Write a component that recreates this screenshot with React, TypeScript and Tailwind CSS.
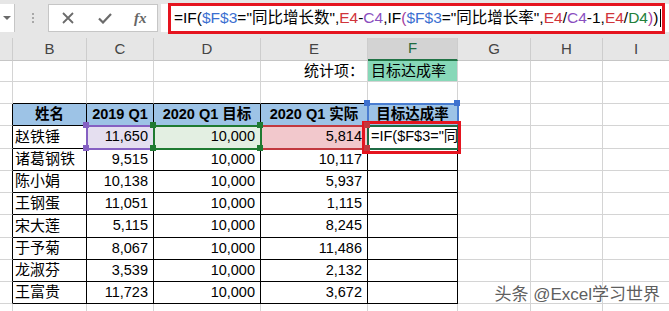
import React from "react";

type Row = [string, string, string, string];

const people: Row[] = [
  ["赵铁锤", "11,650", "10,000", "5,814"],
  ["诸葛钢铁", "9,515", "10,000", "10,117"],
  ["陈小娟", "10,138", "10,000", "5,937"],
  ["王钢蛋", "11,051", "10,000", "1,115"],
  ["宋大莲", "5,115", "10,000", "8,245"],
  ["于予菊", "8,067", "10,000", "11,486"],
  ["龙淑芬", "3,539", "10,000", "2,132"],
  ["王富贵", "11,723", "10,000", "3,672"],
];

const letters = ["", "B", "C", "D", "E", "F", "G", "H", "I"];

function Cell({ r, c, className = "", children }: { r: number; c: number; className?: string; children?: React.ReactNode }) {
  const edgeR = r >= 3 && r <= 11 && c <= 5;
  const edgeB = r >= 2 && r <= 11 && c >= 1 && c <= 5;
  return (
    <div
      className={`relative flex items-center whitespace-nowrap border-r border-b ${
        edgeR ? "border-r-black" : "border-r-[#d4d4d4]"
      } ${edgeB ? "border-b-black" : "border-b-[#d4d4d4]"} ${className}`}
    >
      {children}
    </div>
  );
}

// little square grips on the corners of a referenced range
function Grips({ color, corners }: { color: string; corners: string[] }) {
  return (
    <>
      {corners.map((k) => (
        <span
          key={k}
          className={`absolute z-10 h-[6px] w-[6px] ${color} ${
            k === "tl"
              ? "-left-[4px] -top-[4px]"
              : k === "tr"
              ? "-right-[3px] -top-[4px]"
              : k === "bl"
              ? "-bottom-[3px] -left-[4px]"
              : "-bottom-[3px] -right-[3px]"
          }`}
        />
      ))}
    </>
  );
}

function Toolbar() {
  return (
    <div className="flex h-[38px] items-start bg-[#e6e6e6] pt-[4px]">
      <div className="flex h-[28px] w-[15px] items-center justify-center border-r border-[#c6c6c6] bg-white">
        <div className="h-0 w-0 border-x-[4px] border-t-[4px] border-x-transparent border-t-[#6a6a6a]" />
      </div>
      <div className="ml-[17px] flex h-[28px] flex-col items-center justify-center gap-[2px]">
        <div className="h-[2px] w-[2px] bg-[#a8a8a8]" />
        <div className="h-[2px] w-[2px] bg-[#a8a8a8]" />
        <div className="h-[2px] w-[2px] bg-[#a8a8a8]" />
      </div>
      <div className="ml-[14px] flex h-[28px] w-[110px] items-center border border-[#c6c6c6] bg-white">
        <svg width="12" height="12" viewBox="0 0 12 12" className="ml-[13px]">
          <path d="M1 1L11 11M11 1L1 11" stroke="#6b6b6b" strokeWidth="1.8" />
        </svg>
        <svg width="14" height="11" viewBox="0 0 14 11" className="ml-[24px]">
          <path d="M1 5.5L5 9.5L13 1" stroke="#6b6b6b" strokeWidth="2.2" fill="none" />
        </svg>
        <span className="ml-[22px] font-['Liberation_Serif',serif] text-[15px] font-bold italic text-[#666]">fx</span>
      </div>
      <div className="relative ml-[3px] flex h-[28px] flex-1 items-center bg-white pl-[13px] text-[15.5px] text-black">
        <span className="whitespace-nowrap">
          =IF(<span className="text-[#3b6fd1]">$F$3</span>="同比增长数",<span className="text-[#d0343a]">E4</span>-
          <span className="text-[#8a4fbf]">C4</span>,IF<span className="text-[#a33a9c]">(</span>
          <span className="text-[#3b6fd1]">$F$3</span>="同比增长率",<span className="text-[#d0343a]">E4</span>/
          <span className="text-[#8a4fbf]">C4</span>-1,<span className="text-[#d0343a]">E4</span>/
          <span className="text-[#23803a]">D4</span>
          <span className="text-[#a33a9c]">)</span>)
        </span>
        <div className="ml-[2px] h-[18px] w-px bg-black" />
        <div className="absolute left-[7px] top-[-1px] h-[31px] w-[497px] border-[3px] border-[#e5141f]" />
      </div>
    </div>
  );
}

function ColumnHeaders() {
  return (
    <>
      {letters.map((l, c) => (
        <div
          key={c}
          className={`flex items-center justify-center border-r border-r-[#cdcdcd] text-[15px] ${
            l === "F"
              ? "border-b-2 border-b-[#217346] bg-[#d3d3d3] text-[#1e6b3f]"
              : "border-b border-b-[#c6c6c6] bg-[#e6e6e6] text-[#444]"
          }`}
        >
          {l}
        </div>
      ))}
    </>
  );
}

export default function App() {
  const body: React.ReactNode[] = [];
  for (let r = 1; r <= 12; r++) {
    for (let c = 0; c <= 8; c++) {
      let cls = "";
      let content: React.ReactNode = null;
      if (r === 1 && c === 4) {
        cls = "justify-end pr-[3px] text-[15px]";
        content = "统计项：";
      } else if (r === 1 && c === 5) {
        cls = "bg-[#87d8b8] pl-[3px] text-[15px]";
        content = "目标达成率";
      } else if (r === 3 && c >= 1 && c <= 5) {
        cls = "justify-center bg-[#9dc3e6] font-bold text-[14.5px]";
        content = ["姓名", "2019 Q1", "2020 Q1 目标", "2020 Q1 实际", "目标达成率"][c - 1];
        if (c === 5) {
          cls += " z-[1] outline-2 -outline-offset-1 outline-[#4a7dd0]";
          content = (
            <>
              目标达成率
              <Grips color="bg-[#3f72cf]" corners={["tl", "tr"]} />
            </>
          );
        }
      } else if (r >= 4 && r <= 11 && c >= 1 && c <= 5) {
        const p = people[r - 4];
        if (c === 1) {
          cls = "pl-[2px] text-[15px]";
          content = p[0];
        } else if (c <= 4) {
          cls = "justify-end pr-[5px] text-[14.5px]";
          content = p[c - 1];
          if (r === 4 && c === 2) {
            cls += " z-[1] bg-[#e5dff0] outline-2 -outline-offset-1 outline-[#8560c2]";
            content = (
              <>
                {p[1]}
                <Grips color="bg-[#8560c2]" corners={["tl", "bl"]} />
              </>
            );
          }
          if (r === 4 && c === 4) cls += " z-[1] bg-[#f2c8cc] outline-2 -outline-offset-1 outline-[#c2393f]";
          if (r === 4 && c === 3) {
            cls += " z-[2] bg-[#e3efe2] outline-2 -outline-offset-1 outline-[#1f7a32]";
            content = (
              <>
                {p[2]}
                <Grips color="bg-[#1f7a32]" corners={["tl", "tr", "bl", "br"]} />
              </>
            );
          }
        } else if (r === 4) {
          cls = "z-[3] overflow-visible pl-[3px] text-[14.5px] outline-2 -outline-offset-1 outline-[#1f6b45]";
          content = (
            <>
              <span className="overflow-hidden">=IF($F$3="同</span>
              <Grips color="bg-[#c2393f]" corners={["tl", "bl"]} />
              <span className="absolute -bottom-[6px] -left-[6px] -right-[4px] -top-[5px] border-[3px] border-[#e5141f]" />
            </>
          );
        }
      }
      body.push(
        <Cell key={`${r}-${c}`} r={r} c={c} className={cls}>
          {content}
        </Cell>
      );
    }
  }

  return (
    <div className="relative h-[311px] w-[669px] overflow-hidden bg-white font-['Liberation_Sans','Noto_Sans_CJK_SC',sans-serif] text-black">
      <Toolbar />
      <div className="grid grid-cols-[13px_74px_67px_107px_107px_90px_73px_72px_67px] grid-rows-[23px_21px_22px_22px_23px_22px_22px_22px_23px_22px_22px_22px_10px]">
        <ColumnHeaders />
        {body}
      </div>

      <div className="absolute bottom-[4px] right-[9px] whitespace-nowrap text-[17px] text-[#5f5f5f] [text-shadow:0_0_2px_#fff,0_0_2px_#fff]">
        头条 @Excel学习世界
      </div>
    </div>
  );
}
